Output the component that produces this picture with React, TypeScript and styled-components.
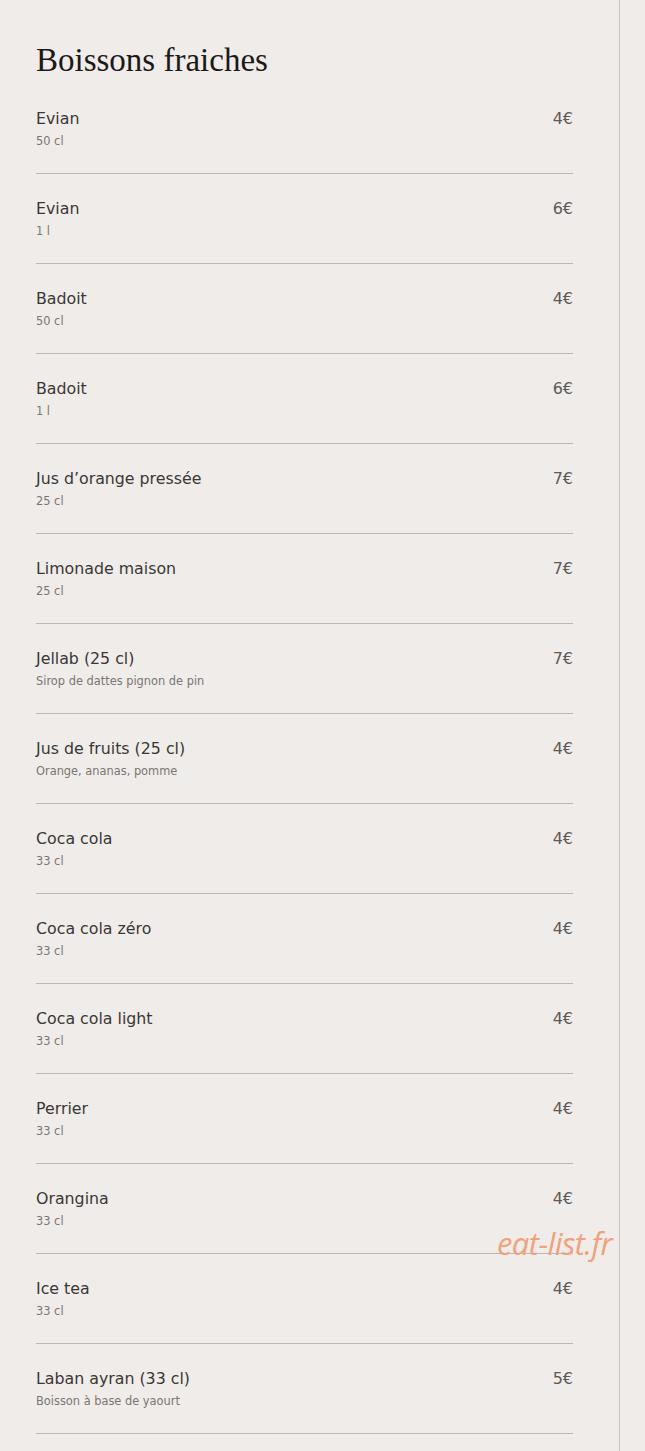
import styled, { createGlobalStyle } from 'styled-components'

const GlobalStyle = createGlobalStyle`
  html, body {
    margin: 0;
    padding: 0;
    background: #f0ece9;
  }
  body {
    font-family: "DejaVu Sans", "Open Sans", sans-serif;
  }
`

type Item = { name: string; detail: string; price: string }

const ITEMS: Item[] = [
  { name: 'Evian', detail: '50 cl', price: '4€' },
  { name: 'Evian', detail: '1 l', price: '6€' },
  { name: 'Badoit', detail: '50 cl', price: '4€' },
  { name: 'Badoit', detail: '1 l', price: '6€' },
  { name: 'Jus d’orange pressée', detail: '25 cl', price: '7€' },
  { name: 'Limonade maison', detail: '25 cl', price: '7€' },
  { name: 'Jellab (25 cl)', detail: 'Sirop de dattes pignon de pin', price: '7€' },
  { name: 'Jus de fruits (25 cl)', detail: 'Orange, ananas, pomme', price: '4€' },
  { name: 'Coca cola', detail: '33 cl', price: '4€' },
  { name: 'Coca cola zéro', detail: '33 cl', price: '4€' },
  { name: 'Coca cola light', detail: '33 cl', price: '4€' },
  { name: 'Perrier', detail: '33 cl', price: '4€' },
  { name: 'Orangina', detail: '33 cl', price: '4€' },
  { name: 'Ice tea', detail: '33 cl', price: '4€' },
  { name: 'Laban ayran (33 cl)', detail: 'Boisson à base de yaourt', price: '5€' },
]

export default function App() {
  return (
    <Page>
      <GlobalStyle />
      <Column>
        <Title>Boissons fraiches</Title>
        <MenuList>
          {ITEMS.map((item, i) => (
            <MenuRow key={i}>
              <Info>
                <Name>{item.name}</Name>
                <Detail>{item.detail}</Detail>
              </Info>
              <Price>{item.price}</Price>
            </MenuRow>
          ))}
        </MenuList>
        <Watermark>eat-list.fr</Watermark>
      </Column>
    </Page>
  )
}

const Page = styled.div`
  min-height: 100vh;
  background: #f0ece9;
`

const Column = styled.div`
  position: relative;
  box-sizing: border-box;
  width: 620px;
  min-height: 100vh;
  padding: 40px 46px 0 36px;
  border-right: 1px solid #c9c4c1;
`

const Title = styled.h1`
  margin: 0 0 4px;
  font-family: "Liberation Serif", "DejaVu Serif", serif;
  font-weight: 400;
  font-size: 33px;
  line-height: 40px;
  color: #1c1a19;
`

const MenuList = styled.div`
  display: flex;
  flex-direction: column;
`

const MenuRow = styled.div`
  display: flex;
  justify-content: space-between;
  align-items: flex-start;
  height: 64px;
  padding-top: 25px;
  border-bottom: 1px solid #bdb8b5;
`

const Info = styled.div`
  display: flex;
  flex-direction: column;
  gap: 4px;
`

const Name = styled.div`
  font-size: 15.8px;
  line-height: 20px;
  color: #3a3736;
`

const Detail = styled.div`
  font-size: 11.4px;
  line-height: 16px;
  color: #7a7674;
`

const Price = styled.div`
  font-size: 16px;
  line-height: 20px;
  color: #5e5a58;
`

const Watermark = styled.div`
  position: absolute;
  left: 497px;
  top: 1223px;
  font-family: "Open Sans", sans-serif;
  font-style: italic;
  font-size: 31px;
  line-height: 40px;
  color: #f0a27c;
  letter-spacing: -0.6px;
`
